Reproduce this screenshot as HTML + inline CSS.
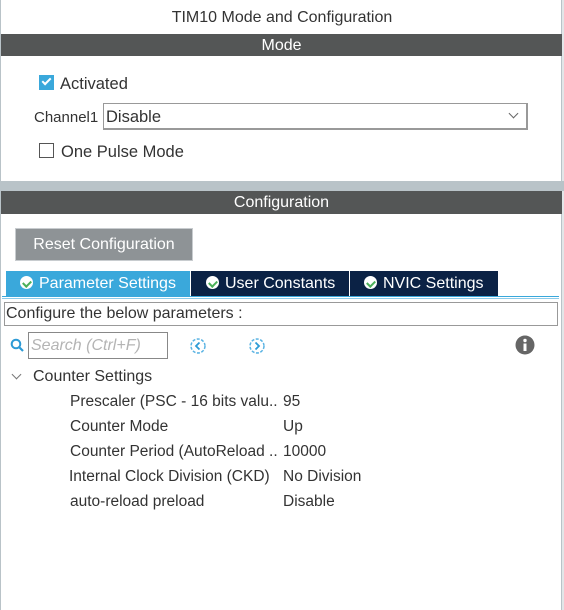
<!DOCTYPE html>
<html><head><meta charset="utf-8"><style>
*{margin:0;padding:0;box-sizing:border-box}
body{width:564px;height:610px;background:#fff;font-family:"Liberation Sans",Arial,sans-serif;color:#333;position:relative;overflow:hidden;font-size:16px}
.a{position:absolute;white-space:nowrap}
.bar{position:absolute;left:1px;right:2px;background:#545656;color:#fff;text-align:center;font-size:16px}
.tab{position:absolute;top:271px;height:25px;color:#fff;font-size:16px;line-height:25px}
.chk{display:inline-block;width:13px;height:13px;border-radius:50%;background:#fff;vertical-align:-1px;margin-right:6px;position:relative}
.chk:after{content:"";position:absolute;left:3.5px;top:2.5px;width:4px;height:6px;border:solid #4cb05a;border-width:0 2px 2px 0;transform:rotate(45deg)}
.row{position:absolute;font-size:15.5px;color:#333;white-space:nowrap}
</style></head><body>
<div class="a" style="left:0;top:0;width:1px;height:610px;background:#b9c3c8"></div>
<div class="a" style="right:0;top:0;width:3px;height:610px;background:#e2e6e8;border-left:1px solid #b9c3c8"></div>
<div class="a" style="left:0;width:564px;top:9px;text-align:center;font-size:16px;color:#333">TIM10 Mode and Configuration</div>
<div class="bar" style="top:34px;height:22px;line-height:23px">Mode</div>
<div class="a" style="left:39px;top:75px;width:15px;height:15px;background:#3aa8db"></div>
<div class="a" style="left:44px;top:76px;width:5px;height:9px;border:solid #fff;border-width:0 2px 2px 0;transform:rotate(45deg)"></div>
<div class="a" style="left:60px;top:75px;font-size:16.5px">Activated</div>
<div class="a" style="left:34px;top:109px;font-size:15px">Channel1</div>
<div class="a" style="left:103px;top:103px;width:425px;height:27px;border:1px solid #999;border-right-width:2px;border-bottom-width:2px"></div>
<div class="a" style="left:106px;top:108px;font-size:16.5px">Disable</div>
<div class="a" style="left:510px;top:110px;width:7px;height:7px;border:solid #666;border-width:0 1px 1px 0;transform:rotate(45deg)"></div>
<div class="a" style="left:39px;top:143px;width:15px;height:15px;border:1.5px solid #555"></div>
<div class="a" style="left:61px;top:143px;font-size:16.5px">One Pulse Mode</div>
<div class="a" style="left:0;right:0;top:181px;height:10px;background:#b9c3c8"></div>
<div class="bar" style="top:191px;height:23px;line-height:24px">Configuration</div>
<div class="a" style="left:15px;top:228px;width:178px;height:33px;background:#8e9396;border:1px solid #c8cccf;color:#fff;font-size:16px;line-height:31px;text-align:center">Reset Configuration</div>
<div class="tab" style="left:6px;width:184px;background:#3aa8db;padding-left:14px"><span class="chk"></span>Parameter Settings</div>
<div class="tab" style="left:191px;width:158px;background:#0b2245;padding-left:15px"><span class="chk"></span>User Constants</div>
<div class="tab" style="left:350px;width:148px;background:#0b2245;padding-left:14px"><span class="chk"></span>NVIC Settings</div>
<div class="a" style="left:2px;width:557px;top:296px;height:1px;background:#3aa8db"></div>
<div class="a" style="left:2px;width:557px;top:298px;height:1px;background:#8ccbe9"></div>
<div class="a" style="left:4px;top:302px;width:554px;height:24px;border:1px solid #999"></div>
<div class="a" style="left:6px;top:305px;font-size:16px">Configure the below parameters :</div>
<svg class="a" style="left:10px;top:338px" width="16" height="16"><circle cx="6" cy="6" r="4.3" fill="none" stroke="#2d9bd6" stroke-width="2"/><line x1="9" y1="9" x2="13" y2="13" stroke="#2d9bd6" stroke-width="2.2"/></svg>
<div class="a" style="left:28px;top:332px;width:140px;height:27px;border:1.5px solid #888"></div>
<div class="a" style="left:31px;top:337px;font-size:16px;font-style:italic;color:#b4b4b4">Search (Ctrl+F)</div>
<svg class="a" style="left:189px;top:337px" width="18" height="18"><circle cx="9" cy="9" r="7" fill="none" stroke="#5ab3e3" stroke-width="1.5" stroke-dasharray="3 1.5"/><polyline points="10.5,5.5 7,9 10.5,12.5" fill="none" stroke="#2d9bd6" stroke-width="1.8"/></svg>
<svg class="a" style="left:248px;top:337px" width="18" height="18"><circle cx="9" cy="9" r="7" fill="none" stroke="#5ab3e3" stroke-width="1.5" stroke-dasharray="3 1.5"/><polyline points="7.5,5.5 11,9 7.5,12.5" fill="none" stroke="#2d9bd6" stroke-width="1.8"/></svg>
<svg class="a" style="left:515px;top:335px" width="20" height="20"><circle cx="10" cy="10" r="9.5" fill="#666"/><circle cx="10" cy="5.5" r="1.7" fill="#fff"/><rect x="8.5" y="8.5" width="3" height="7.5" fill="#fff"/></svg>
<div class="a" style="left:13px;top:371px;width:7px;height:7px;border:solid #777;border-width:0 1px 1px 0;transform:rotate(45deg)"></div>
<div class="row" style="left:33px;top:368px;font-size:16px">Counter Settings</div>
<div class="row" style="left:70px;top:393px">Prescaler (PSC - 16 bits valu..</div><div class="row" style="left:283px;top:393px">95</div>
<div class="row" style="left:70px;top:418px">Counter Mode</div><div class="row" style="left:283px;top:418px">Up</div>
<div class="row" style="left:70px;top:443px">Counter Period (AutoReload ..</div><div class="row" style="left:283px;top:443px">10000</div>
<div class="row" style="left:69px;top:468px">Internal Clock Division (CKD)</div><div class="row" style="left:283px;top:468px">No Division</div>
<div class="row" style="left:70px;top:493px">auto-reload preload</div><div class="row" style="left:283px;top:493px">Disable</div>
</body></html>
